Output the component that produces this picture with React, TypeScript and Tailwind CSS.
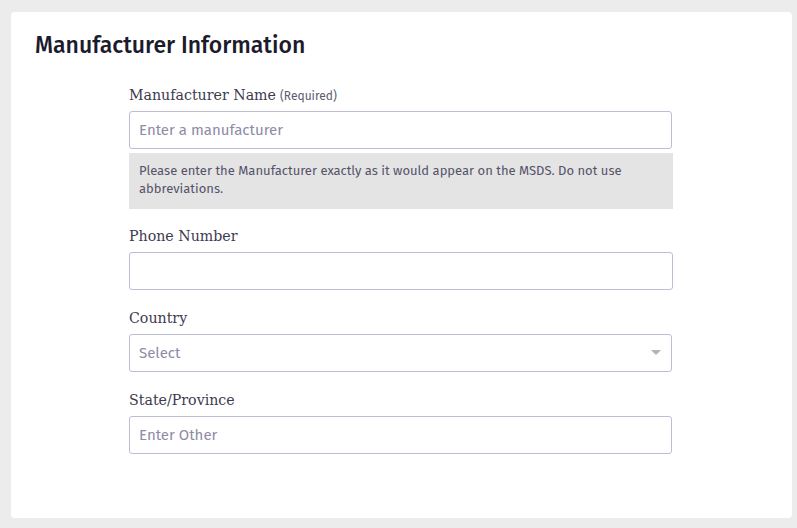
import React from 'react';

const sans = "font-['Fira_Sans','Noto_Sans','Open_Sans',sans-serif]";
const serif = "font-['DejaVu_Serif','Liberation_Serif',serif]";

function Label({ children, extra }: { children: React.ReactNode; extra?: string }) {
  return (
    <div className="flex items-baseline gap-1 h-5 mb-[6px]">
      <span className={`${serif} text-[14.2px] leading-5 text-[#3d3a4f]`}>{children}</span>
      {extra && <span className={`${sans} text-[12px] text-[#5d5a70]`}>{extra}</span>}
    </div>
  );
}

function TextInput({ placeholder }: { placeholder?: string }) {
  return (
    <input
      type="text"
      placeholder={placeholder}
      className={`${sans} block w-full h-[38px] rounded-[3px] border border-[#bfbdd3] bg-white px-[9px] text-[15px] text-[#3d3a4f] placeholder:text-[#8e8ba6] outline-none`}
    />
  );
}

export default function App() {
  return (
    <div className="min-h-[528px] bg-[#ececec] pt-3 pl-[11px] pr-[5px] pb-[10px]">
      <div className="bg-white rounded-[4px] h-[506px] pt-[19px] pl-6">
        <h2 className={`${sans} text-[23px] leading-7 font-medium text-[#1c1b2e]`}>Manufacturer Information</h2>
        <div className="ml-[94px] w-[544px] mt-[26px]">
          <Label extra="(Required)">Manufacturer Name</Label>
          <div className="w-[543px]">
            <TextInput placeholder="Enter a manufacturer" />
          </div>
          <div className={`${sans} mt-1 bg-[#e4e4e4] pl-[10px] pr-4 pt-[9px] pb-[11px] text-[13px] leading-[18px] text-[#55536a]`}>
            Please enter the Manufacturer exactly as it would appear on the MSDS. Do not use abbreviations.
          </div>

          <div className="mt-[17px]">
            <Label>Phone Number</Label>
            <TextInput />
          </div>

          <div className="mt-[18px] w-[543px]">
            <Label>Country</Label>
            <div className="relative">
              <div className={`${sans} flex items-center h-[38px] rounded-[3px] border border-[#bfbdd3] bg-white px-[9px] text-[15px] text-[#8e8ba6]`}>
                Select
              </div>
              <svg className="absolute right-[11px] top-[16px]" width="10" height="6" viewBox="0 0 10 6">
                <path d="M0 0 L10 0 L5 5 Z" fill="#b3b1c3" />
              </svg>
            </div>
          </div>

          <div className="mt-[18px] w-[543px]">
            <Label>State/Province</Label>
            <TextInput placeholder="Enter Other" />
          </div>
        </div>
      </div>
    </div>
  );
}
